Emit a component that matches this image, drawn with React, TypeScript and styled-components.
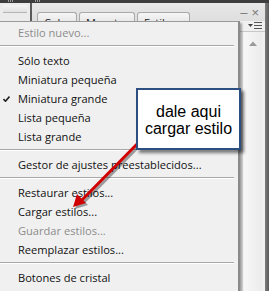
import React from 'react';
import styled, { createGlobalStyle } from 'styled-components';

const GlobalStyle = createGlobalStyle`
  html, body { margin: 0; padding: 0; background: #474747; }
  * { box-sizing: border-box; }
`;

const Screen = styled.div`
  position: relative;
  width: 269px;
  height: 291px;
  overflow: hidden;
  display: flex;
  flex-direction: column;
  background: #474747;
  font-family: "Open Sans", "Noto Sans", sans-serif;
`;

const TopStrip = styled.div`
  height: 3px;
  flex: none;
  background: #3d3d3d;
  display: flex;
  gap: 22px;
  padding-left: 8px;
`;

const Grip = styled.div`
  width: 5px;
  height: 2px;
  background: repeating-linear-gradient(90deg, #9a9a9a 0 1px, transparent 1px 2px);
`;

const Docks = styled.div`
  flex: 1;
  display: flex;
`;

const LeftDock = styled.div`
  width: 30px;
  background: linear-gradient(#ececec, #dadada);
  padding: 2px 3px 0;
`;

const DockButton = styled.div`
  height: 8px;
  border-bottom: 1px solid #b4b4b4;
  background: linear-gradient(#f4f4f4, #e2e2e2);
`;

const DockDivider = styled.div`
  width: 2px;
  background: #5a5a5a;
`;

const MainPanel = styled.div`
  flex: 1;
  display: flex;
  flex-direction: column;
  background: #f0f0f0;
`;

const TabBar = styled.div`
  height: 18px;
  flex: none;
  display: flex;
  align-items: flex-end;
  gap: 2px;
  padding: 0 6px 0 5px;
  background: linear-gradient(#e8e8e8, #dedede);
`;

const Tab = styled.div<{ $w: number }>`
  width: ${p => p.$w}px;
  height: 9px;
  border: 1px solid #a9a9a9;
  border-bottom: none;
  border-radius: 3px 3px 0 0;
  background: linear-gradient(#f6f6f6, #e9e9e9);
  font-size: 11px;
  line-height: 14px;
  padding: 3px 0 0 6px;
  color: #222;
  overflow: hidden;
  white-space: nowrap;
`;

const WindowControls = styled.div`
  margin-left: auto;
  align-self: flex-start;
  margin-top: 3px;
  display: flex;
  gap: 4px;
  color: #7a7a7a;
  font-family: "Liberation Sans", sans-serif;
  font-size: 13px;
  line-height: 13px;
`;

const PanelBody = styled.div`
  flex: 1;
  display: flex;
`;

const Content = styled.div`
  flex: 1;
  background: #f0f0f0;
`;

const SideColumn = styled.div`
  width: 25px;
  display: flex;
  flex-direction: column;
  background: #f0f0f0;
`;

const MenuButton = styled.div`
  height: 11px;
  display: flex;
  justify-content: flex-end;
  align-items: center;
  padding-right: 3px;
  border-bottom: 1px solid #c8c8c8;
`;

const ScrollTrack = styled.div`
  flex: 1;
  margin: 0 3px 0 2px;
  background: linear-gradient(90deg, #f7f7f7, #ececec);
  border-left: 1px solid #e2e2e2;
  display: flex;
  justify-content: center;
  padding-top: 9px;
`;

const RightEdge = styled.div`
  width: 4px;
  background: linear-gradient(90deg, #7c7c7c, #5b5b5b);
`;

const Menu = styled.div`
  position: absolute;
  top: 21px;
  left: -10px;
  width: 250px;
  height: 290px;
  background: #f0f0f0;
  border: 1px solid #9a9a9a;
  border-right: 2px solid #8a8a8a;
  box-shadow: 2px 2px 2px rgba(0, 0, 0, 0.35);
  padding-top: 1px;
`;

const Item = styled.div<{ $disabled?: boolean }>`
  position: relative;
  height: 19px;
  line-height: 19px;
  padding-left: 27px;
  font-size: 11.1px;
  color: ${p => (p.$disabled ? '#8c8c8c' : '#111')};
  white-space: nowrap;
`;

const Check = styled.svg`
  position: absolute;
  left: 12px;
  top: 7px;
`;

const Separator = styled.div`
  height: 9px;
  padding-top: 3px;
  margin-right: 4px;
  &::after {
    content: '';
    display: block;
    height: 1px;
    background: #a8a8a8;
    box-shadow: 0 1px 0 #ffffff;
  }
`;

const Callout = styled.div`
  position: absolute;
  left: 136px;
  top: 88px;
  width: 105px;
  height: 62px;
  background: #ffffff;
  border: 2px solid #2a4f80;
  box-shadow: 3px 3px 3px rgba(0, 0, 0, 0.5);
  display: flex;
  align-items: center;
  justify-content: center;
  text-align: center;
  font-family: "Liberation Sans", Arial, sans-serif;
  font-size: 16px;
  line-height: 17px;
  color: #000;
  padding-top: 1px;
`;

const ArrowLayer = styled.svg`
  position: absolute;
  left: 0;
  top: 0;
  pointer-events: none;
`;

export default function App() {
  return (
    <>
      <GlobalStyle />
      <Screen>
        <TopStrip>
          <Grip />
          <Grip />
        </TopStrip>
        <Docks>
          <LeftDock>
            <DockButton />
          </LeftDock>
          <DockDivider />
          <MainPanel>
            <TabBar>
              <Tab $w={40}>Color</Tab>
              <Tab $w={56}>Muestras</Tab>
              <Tab $w={53}>Estilos ×</Tab>
              <WindowControls>
                <span>–</span>
                <span>×</span>
              </WindowControls>
            </TabBar>
            <PanelBody>
              <Content />
              <SideColumn>
                <MenuButton>
                  <svg width="14" height="8" viewBox="0 0 14 8">
                    <path d="M0 2h5L2.5 5z" fill="#444" />
                    <path d="M6 0.5h8M6 3.5h8M6 6.5h8" stroke="#555" strokeWidth="1" />
                  </svg>
                </MenuButton>
                <ScrollTrack>
                  <svg width="8" height="5" viewBox="0 0 8 5">
                    <path d="M0 5L4 0.5L8 5z" fill="#9a9a9a" />
                  </svg>
                </ScrollTrack>
              </SideColumn>
            </PanelBody>
          </MainPanel>
          <RightEdge />
        </Docks>

        <Menu>
          <Item $disabled>Estilo nuevo...</Item>
          <Separator />
          <Item>Sólo texto</Item>
          <Item>Miniatura pequeña</Item>
          <Item>
            <Check width="7" height="6" viewBox="0 0 7 6">
              <path d="M0.5 3L2.5 5.2L6.5 0.5" stroke="#222" strokeWidth="1.6" fill="none" />
            </Check>
            Miniatura grande
          </Item>
          <Item>Lista pequeña</Item>
          <Item>Lista grande</Item>
          <Separator />
          <Item>Gestor de ajustes preestablecidos...</Item>
          <Separator />
          <Item>Restaurar estilos...</Item>
          <Item>Cargar estilos...</Item>
          <Item $disabled>Guardar estilos...</Item>
          <Item>Reemplazar estilos...</Item>
          <Separator />
          <Item>Botones de cristal</Item>
        </Menu>

        <ArrowLayer width="269" height="291" viewBox="0 0 269 291">
          <g opacity="0.35">
            <line x1="147" y1="138" x2="83" y2="203" stroke="#000" strokeWidth="3" />
            <path d="M75 209L79 196L88 205z" fill="#000" />
          </g>
          <line x1="145" y1="136" x2="81" y2="201" stroke="#d00000" strokeWidth="3" />
          <path d="M73 207L77 194L86 203z" fill="#d00000" />
        </ArrowLayer>

        <Callout>
          dale aqui
          <br />
          cargar estilo
        </Callout>
      </Screen>
    </>
  );
}
